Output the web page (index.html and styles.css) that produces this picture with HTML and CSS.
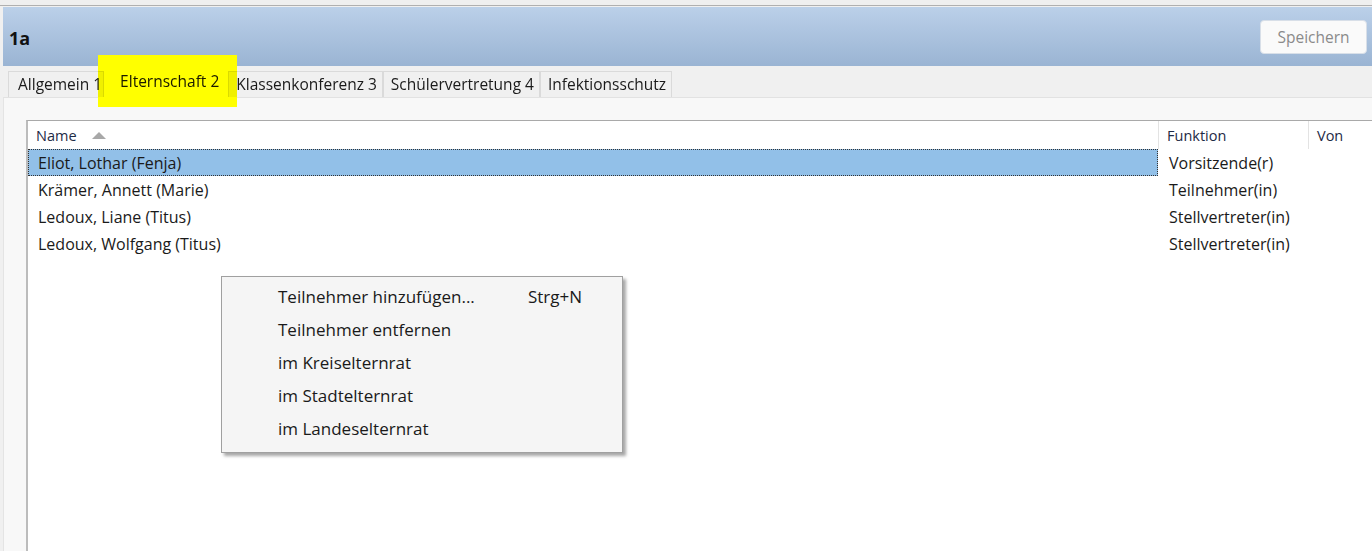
FILE: index.html
```html
<!DOCTYPE html>
<html lang="de">
  <head>
    <meta charset="UTF-8" />
    <meta name="viewport" content="width=device-width, initial-scale=1.0" />
    <title>Klasse 1a</title>
    <link rel="stylesheet" href="styles.css">
  </head>

  <body>
    <div class="topstrip"></div>

    <header class="kopf">
      <h1>1a</h1>
      <button class="speichern" disabled>Speichern</button>
    </header>

    <nav class="reiter">
      <div class="reiter-knap">Allgemein 1</div>
      <div class="reiter-knap valgt">Elternschaft 2</div>
      <div class="reiter-knap">Klassenkonferenz 3</div>
      <div class="reiter-knap">Schülervertretung 4</div>
      <div class="reiter-knap">Infektionsschutz</div>
      <div class="markering"></div>
    </nav>

    <section class="panel">
      <div class="liste">
        <div class="liste-kopf">
          <div class="kol navn">Name <span class="pil"></span></div>
          <div class="kol funktion">Funktion</div>
          <div class="kol von">Von</div>
        </div>
        <div class="raekke aktiv">
          <div class="kol navn"><span>Eliot, Lothar (Fenja)</span></div>
          <div class="kol funktion">Vorsitzende(r)</div>
          <div class="kol von"></div>
        </div>
        <div class="raekke">
          <div class="kol navn">Krämer, Annett (Marie)</div>
          <div class="kol funktion">Teilnehmer(in)</div>
          <div class="kol von"></div>
        </div>
        <div class="raekke">
          <div class="kol navn">Ledoux, Liane (Titus)</div>
          <div class="kol funktion">Stellvertreter(in)</div>
          <div class="kol von"></div>
        </div>
        <div class="raekke">
          <div class="kol navn">Ledoux, Wolfgang (Titus)</div>
          <div class="kol funktion">Stellvertreter(in)</div>
          <div class="kol von"></div>
        </div>
      </div>

      <ul class="menu">
        <li><span>Teilnehmer hinzufügen...</span><span class="genvej">Strg+N</span></li>
        <li>Teilnehmer entfernen</li>
        <li>im Kreiselternrat</li>
        <li>im Stadtelternrat</li>
        <li>im Landeselternrat</li>
      </ul>
    </section>
  </body>
</html>
```

FILE: styles.css
```css
* {
  box-sizing: border-box;
}

body {
  margin: 0;
  height: 551px;
  overflow: hidden;
  background-color: #f0f0f0;
  font-family: "Open Sans", "Noto Sans", sans-serif;
  font-size: 16px;
  color: #1a1a1a;
}

.topstrip {
  height: 6px;
  background-color: #efefef;
  border-bottom: 1px solid #b0b0b0;
  margin-bottom: 1px;
}

.kopf {
  margin-left: 3px;
  height: 59px;
  display: flex;
  align-items: center;
  justify-content: space-between;
  padding: 0 5px 0 6px;
  background: linear-gradient(#bbd0e9, #9ab4d3);
}

.kopf h1 {
  margin: 3px 0 0 0;
  font-size: 18px;
  font-weight: bold;
  color: #111;
}

.speichern {
  width: 107px;
  height: 34px;
  margin-top: 0;
  border: 1px solid #d8dfe8;
  border-radius: 4px;
  background-color: #fafafa;
  color: #8a8a8a;
  font-family: inherit;
  font-size: 15.5px;
}

.reiter {
  position: relative;
  z-index: 2;
  display: flex;
  padding: 5px 0 0 8px;
  height: 31px;
  font-size: 15.5px;
}

.reiter-knap {
  height: 26px;
  padding: 1px 5px 0 7px;
  border: 1px solid #dadada;
  border-bottom: none;
  background-color: #f0f0f0;
  white-space: nowrap;
}

.reiter-knap:first-child {
  padding-left: 9px;
  padding-right: 1px;
}

.reiter-knap.valgt {
  padding: 0 8px 0 15px;
  margin-top: -2px;
  height: 28px;
  background-color: transparent;
  border-color: transparent;
}

/* gul markering over den valgte fane */
.markering {
  position: absolute;
  left: 98px;
  top: -11px;
  width: 139px;
  height: 52px;
  background-color: #ffff00;
  mix-blend-mode: multiply;
  pointer-events: none;
}

.panel {
  position: relative;
  margin-left: 3px;
  height: 454px;
  padding: 22px 0 0 22px;
  background-color: #f8f8f8;
  border-left: 1px solid #e4e4e4;
  border-top: 1px solid #e2e2e2;
}

.liste {
  height: 100%;
  background-color: #fff;
  border-top: 1px solid #a9a9a9;
  border-left: 2px solid #bcbcbc;
}

.liste-kopf,
.raekke {
  display: flex;
  height: 27px;
  align-items: center;
}

.liste-kopf {
  height: 28px;
  color: #1e2a45;
  font-size: 14.5px;
}

.kol.navn {
  width: 1130px;
  padding-left: 8px;
}

.kol.funktion {
  width: 150px;
  padding-left: 8px;
}

.kol.von {
  flex: 1;
  padding-left: 8px;
}

.liste-kopf .funktion,
.liste-kopf .von {
  border-left: 1px solid #e3e3e3;
  height: 100%;
  display: flex;
  align-items: center;
}

.pil {
  display: inline-block;
  margin-left: 12px;
  border-left: 7px solid transparent;
  border-right: 7px solid transparent;
  border-bottom: 7px solid #a8a8a8;
  vertical-align: 2px;
}

.raekke .kol.navn {
  padding-left: 10px;
}

.raekke .kol.funktion {
  padding-left: 11px;
}

.raekke.aktiv .navn {
  height: 100%;
  display: flex;
  align-items: center;
  background-color: #92c0e8;
  outline: 1px dotted #333;
  outline-offset: -1px;
}

.menu {
  position: absolute;
  left: 217px;
  top: 178px;
  width: 402px;
  margin: 0;
  padding: 3px 0 7px 0;
  list-style: none;
  background-color: #f5f5f5;
  border: 1px solid #a0a0a0;
  box-shadow: 3px 3px 3px rgba(0, 0, 0, 0.35);
  font-size: 17px;
}

.menu li {
  display: flex;
  height: 33px;
  align-items: center;
  padding-left: 56px;
}

.genvej {
  margin-left: auto;
  margin-right: 40px;
}
```
